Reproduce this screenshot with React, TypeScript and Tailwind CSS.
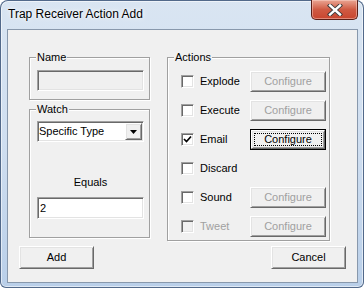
import React from "react";

const font = "font-['Liberation_Sans',Arial,sans-serif]";
const sunken =
  "border border-t-[#a0a0a0] border-l-[#a0a0a0] border-r-white border-b-white shadow-[inset_1px_1px_0_#696969,inset_-1px_-1px_0_#e3e3e3]";
const raised =
  "border border-t-white border-l-white border-r-[#696969] border-b-[#696969] shadow-[inset_1px_1px_0_#e3e3e3,inset_-1px_-1px_0_#a0a0a0]";

function Group({
  label,
  className,
  children,
}: {
  label: string;
  className: string;
  children: React.ReactNode;
}) {
  return (
    <div
      className={
        "relative border border-[#a0a0a0] shadow-[inset_1px_1px_0_#fff,1px_1px_0_#fff] " +
        className
      }
    >
      <span className="absolute left-[6px] top-[-7px] bg-[#f0f0f0] px-[1px] leading-[13px]">
        {label}
      </span>
      {children}
    </div>
  );
}

function Check({ checked, disabled }: { checked?: boolean; disabled?: boolean }) {
  return (
    <div
      className={
        "w-[13px] h-[13px] shrink-0 flex items-center justify-center " +
        sunken +
        (disabled ? " bg-[#f0f0f0]" : " bg-white")
      }
    >
      {checked && (
        <svg width="9" height="9" viewBox="0 0 9 9">
          <path d="M1 4 L3.5 6.5 L8 1.5" stroke="#000" strokeWidth="1.7" fill="none" />
        </svg>
      )}
    </div>
  );
}

function Button({
  text,
  disabled,
  focused,
  className,
}: {
  text: string;
  disabled?: boolean;
  focused?: boolean;
  className: string;
}) {
  if (focused) {
    return (
      <div className={"border border-black bg-[#f0f0f0] " + className}>
        <div className={"relative w-full h-full flex items-center justify-center " + raised}>
          <div className="absolute inset-[2px] border border-dotted border-black" />
          <span className="leading-[13px]">{text}</span>
        </div>
      </div>
    );
  }
  return (
    <div
      className={
        "flex items-center justify-center bg-[#f0f0f0] " +
        raised +
        " " +
        className +
        (disabled ? " text-[#a0a0a0]" : "")
      }
    >
      <span className="leading-[13px]">{text}</span>
    </div>
  );
}

function ActionRow({
  label,
  checked,
  disabled,
  button,
  buttonDisabled,
  focused,
}: {
  label: string;
  checked?: boolean;
  disabled?: boolean;
  button?: boolean;
  buttonDisabled?: boolean;
  focused?: boolean;
}) {
  return (
    <div className="h-[29px] flex items-center pl-[13px]">
      <div className="w-[69px] flex items-center">
        <Check checked={checked} disabled={disabled} />
        <span className={"ml-[6px] leading-[13px]" + (disabled ? " text-[#a0a0a0]" : "")}>
          {label}
        </span>
      </div>
      {button && (
        <Button
          text="Configure"
          disabled={buttonDisabled}
          focused={focused}
          className="w-[76px] h-[21px]"
        />
      )}
    </div>
  );
}

export default function App() {
  return (
    <div
      className={
        "w-[364px] h-[288px] flex flex-col rounded-t-[8px] rounded-b-[6px] overflow-hidden bg-gradient-to-b from-[#d9e5f2] via-[#cfdef0] to-[#b9cfe9] shadow-[inset_0_0_0_1px_#52698a,inset_0_0_0_2px_rgba(255,255,255,0.55)] " +
        font
      }
    >
      {/* Title bar */}
      <div className="h-[29px] flex items-start pl-[8px] pr-[6px] shrink-0">
        <span className="pt-[7px] text-[12px] leading-[15px] text-black [text-shadow:0_0_6px_#fff,0_0_3px_#fff]">
          Trap Receiver Action Add
        </span>
        <div className="ml-auto w-[47px] h-[20px] rounded-b-[5px] border border-t-0 border-[#5b1f17] bg-gradient-to-b from-[#e9a593] via-[#cf5a43] to-[#c9452e] shadow-[inset_0_0_0_1px_rgba(255,220,210,0.45)] flex items-center justify-center">
          <svg width="18" height="12" viewBox="0 0 18 12">
            <path d="M4 1.5 L14 10.5 M14 1.5 L4 10.5" stroke="#3c3c3c" strokeWidth="4.2" strokeLinecap="square" />
            <path d="M4 1.5 L14 10.5 M14 1.5 L4 10.5" stroke="#fff" strokeWidth="2.4" strokeLinecap="square" />
          </svg>
        </div>
      </div>

      {/* Client area */}
      <div className="ml-[7px] mr-[6px] h-[254px] border border-[#8898ac] bg-[#f0f0f0] text-[11px] text-black flex flex-col pt-[27px] pl-[11px] pr-[11px]">
        <div className="flex items-start h-[184px]">
          <div className="ml-[10px] w-[121px] flex flex-col gap-[9px]">
            <Group label="Name" className="h-[43px] pl-[7px] pt-[12px]">
              <div className={"w-[107px] h-[21px] bg-[#f0f0f0] " + sunken} />
            </Group>
            <Group label="Watch" className="h-[129px] pl-[7px] pt-[11px] flex flex-col">
              <div className={"w-[107px] h-[21px] bg-white flex items-center " + sunken}>
                <span className="pl-[1px] leading-[13px]">Specific Type</span>
                <div className={"ml-auto mr-[1px] w-[17px] h-[17px] bg-[#f0f0f0] flex items-center justify-center " + raised}>
                  <svg width="7" height="4" viewBox="0 0 7 4">
                    <path d="M0 0 H7 L3.5 4 Z" fill="#000" />
                  </svg>
                </div>
              </div>
              <div className="mt-[34px] w-[107px] text-center leading-[13px]">Equals</div>
              <div className={"mt-[8px] w-[107px] h-[22px] bg-white flex items-center " + sunken}>
                <span className="pl-[2px] leading-[13px]">2</span>
              </div>
            </Group>
          </div>
          <Group label="Actions" className="ml-[17px] w-[163px] h-[184px] pt-[9px]">
            <ActionRow label="Explode" button buttonDisabled />
            <ActionRow label="Execute" button buttonDisabled />
            <ActionRow label="Email" checked button focused />
            <ActionRow label="Discard" />
            <ActionRow label="Sound" button buttonDisabled />
            <ActionRow label="Tweet" disabled button buttonDisabled />
          </Group>
        </div>
        <div className="mt-[5px] flex">
          <Button text="Add" className="w-[75px] h-[23px]" />
          <Button text="Cancel" className="ml-auto w-[75px] h-[23px]" />
        </div>
      </div>
    </div>
  );
}
